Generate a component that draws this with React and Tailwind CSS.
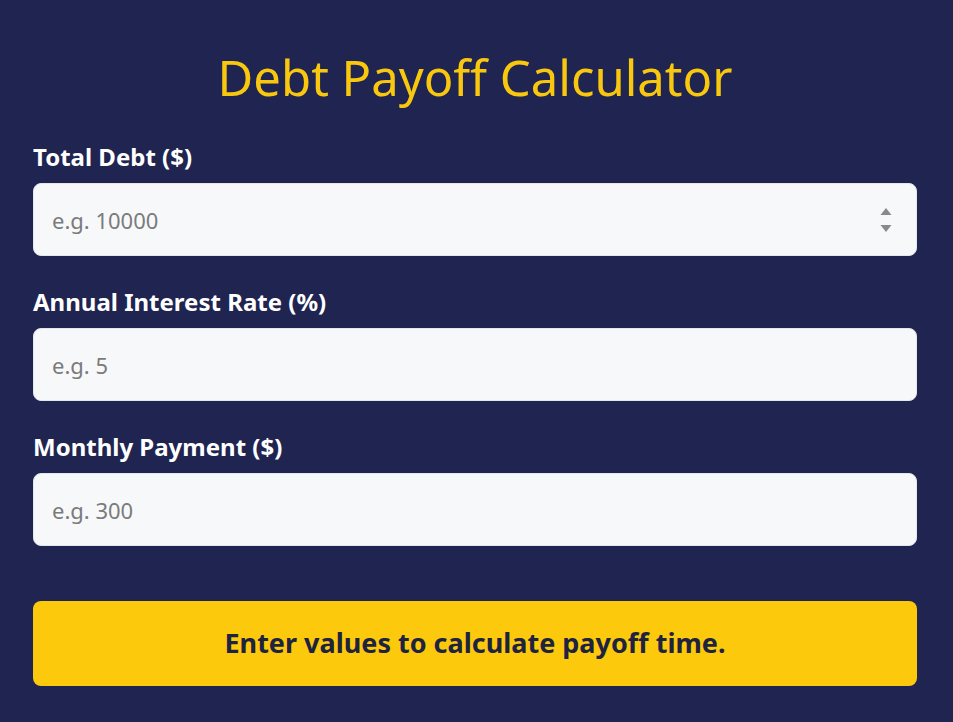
import { useState } from 'react';

function Spinner() {
  return (
    <div className="absolute right-[25px] top-1/2 -translate-y-1/2 flex flex-col items-center gap-[9px] pointer-events-none">
      <svg width="12" height="8" viewBox="0 0 12 8">
        <path d="M6 0.5 L11.5 7.5 L0.5 7.5 Z" fill="#8a8a8a" />
      </svg>
      <svg width="12" height="8" viewBox="0 0 12 8">
        <path d="M0.5 0.5 L11.5 0.5 L6 7.5 Z" fill="#8a8a8a" />
      </svg>
    </div>
  );
}

function Field({ label, placeholder, value, onChange, spinner }) {
  return (
    <div className="flex flex-col">
      <label className="text-white font-bold text-[24px] leading-[28px] mb-[12px]">{label}</label>
      <div className="relative">
        <input
          type="text"
          inputMode="decimal"
          value={value}
          onChange={(e) => onChange(e.target.value)}
          placeholder={placeholder}
          className="w-full h-[73px] rounded-[8px] bg-[#f7f8fa] px-[18px] text-[22px] text-[#333] placeholder:text-[#7b7b7b] outline-none border border-[#e3e6ec]"
        />
        {spinner && <Spinner />}
      </div>
    </div>
  );
}

export default function App() {
  const [debt, setDebt] = useState('');
  const [rate, setRate] = useState('');
  const [payment, setPayment] = useState('');

  let result = 'Enter values to calculate payoff time.';
  const d = parseFloat(debt);
  const r = parseFloat(rate) / 100 / 12;
  const p = parseFloat(payment);
  if (d > 0 && p > 0 && !isNaN(r)) {
    let months;
    if (r === 0) months = Math.ceil(d / p);
    else if (p <= d * r) months = Infinity;
    else months = Math.ceil(-Math.log(1 - (r * d) / p) / Math.log(1 + r));
    result = isFinite(months)
      ? `Payoff time: ${Math.floor(months / 12)} years, ${months % 12} months.`
      : 'Payment too low to cover interest.';
  }

  return (
    <div className="min-h-screen bg-[#1f2451] font-['Noto_Sans','Open_Sans',sans-serif]">
      <div className="pl-[33px] pr-[36px] pt-[45px] pb-[36px] flex flex-col">
        <h1 className="text-center text-[#f9c80e] text-[49px] leading-[64px] font-normal mb-[34px]">
          Debt Payoff Calculator
        </h1>
        <div className="flex flex-col gap-[32px]">
          <Field label="Total Debt ($)" placeholder="e.g. 10000" value={debt} onChange={setDebt} spinner />
          <Field label="Annual Interest Rate (%)" placeholder="e.g. 5" value={rate} onChange={setRate} />
          <Field label="Monthly Payment ($)" placeholder="e.g. 300" value={payment} onChange={setPayment} />
        </div>
        <div className="mt-[55px] h-[85px] rounded-[8px] bg-[#fdc90c] flex items-center justify-center">
          <p className="text-[#1e2340] font-bold text-[27px]">{result}</p>
        </div>
      </div>
    </div>
  );
}
